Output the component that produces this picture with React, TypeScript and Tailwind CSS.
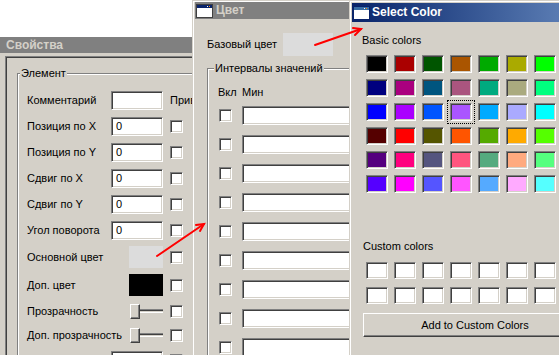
import React from 'react';

const sunken =
  'border border-t-[#808080] border-l-[#808080] border-b-white border-r-white shadow-[inset_1px_1px_0_#404040,inset_-1px_-1px_0_#d4d0c8]';
const raised =
  'border border-t-white border-l-white border-b-[#404040] border-r-[#404040] shadow-[inset_-1px_-1px_0_#808080]';

type PropRow = {
  label: string;
  kind: 'input' | 'swatch' | 'slider';
  h: string;
  value?: string;
  color?: string;
  extra?: string;
};

const propRows: PropRow[] = [
  { label: 'Комментарий', kind: 'input', h: 'h-[26px]', value: '', extra: 'Привязка' },
  { label: 'Позиция по X', kind: 'input', h: 'h-[26px]', value: '0' },
  { label: 'Позиция по Y', kind: 'input', h: 'h-[26px]', value: '0' },
  { label: 'Сдвиг по X', kind: 'input', h: 'h-[26px]', value: '0' },
  { label: 'Сдвиг по Y', kind: 'input', h: 'h-[26px]', value: '0' },
  { label: 'Угол поворота', kind: 'input', h: 'h-[26px]', value: '0' },
  { label: 'Основной цвет', kind: 'swatch', h: 'h-[28px]', color: '#dcdcdc' },
  { label: 'Доп. цвет', kind: 'swatch', h: 'h-[28px]', color: '#000000' },
  { label: 'Прозрачность', kind: 'slider', h: 'h-[24px]' },
  { label: 'Доп. прозрачность', kind: 'slider', h: 'h-[24px]' },
  { label: 'Толщина линии', kind: 'input', h: 'h-[26px]', value: '' },
];

// Qt standard palette, column-major: 8 columns x 6 rows
const basicColors: string[][] = (() => {
  const v3 = [0, 85, 170, 255];
  const v2 = [0, 127, 255];
  const list: string[] = [];
  for (let g = 0; g < 4; g++)
    for (let r = 0; r < 4; r++)
      for (let b = 0; b < 3; b++) {
        const hex = (n: number) => n.toString(16).padStart(2, '0');
        list.push(`#${hex(v3[r])}${hex(v3[g])}${hex(v2[b])}`);
      }
  const rows: string[][] = [];
  for (let row = 0; row < 6; row++) {
    const line: string[] = [];
    for (let col = 0; col < 8; col++) line.push(list[col * 6 + row]);
    rows.push(line);
  }
  return rows;
})();

function Checkbox() {
  return <div className={`w-[13px] h-[13px] shrink-0 bg-white ${sunken}`} />;
}

function WinIcon({ active }: { active: boolean }) {
  return (
    <svg width="17" height="14" viewBox="0 0 17 14" className="shrink-0">
      <rect x="0.5" y="0.5" width="16" height="13" fill="#ffffff" stroke={active ? '#0a246a' : '#404040'} />
      <rect x="1" y="1" width="15" height="3" fill={active ? '#3a6ea5' : '#0a246a'} />
      <rect x="13" y="2" width="1" height="1" fill="#ff8000" />
      <rect x="11" y="2" width="1" height="1" fill="#ffffff" />
    </svg>
  );
}

function Slider() {
  return (
    <div className="flex items-center w-[33px]">
      <div className={`w-[10px] h-[15px] bg-[#d4d0c8] ${raised}`} />
      <div className="flex-1 h-[4px] border-t border-t-[#808080] border-b border-b-white shadow-[inset_0_1px_0_#404040]" />
    </div>
  );
}

function PropertiesWindow() {
  return (
    <div className="absolute left-0 top-[37px] w-[200px] h-[318px] bg-[#d4d0c8]">
      <div className="h-[16px] bg-[#808080] pl-[6px] flex items-center text-[12px] font-bold text-[#d4d0c8]">
        Свойства
      </div>
      <div className="pt-[3px] pl-[5px]">
        <div className="border-l border-t border-[#808080] shadow-[inset_1px_1px_0_#404040] pl-[11px] pt-[10px] h-[300px]">
          <fieldset className="border border-[#808080] shadow-[inset_1px_1px_0_white,1px_1px_0_white] w-[200px]">
            <legend className="ml-[2px] px-px leading-[13px] bg-[#d4d0c8]">Элемент</legend>
            <div className="pl-[9px] pt-[7px]">
              {propRows.map((row) => (
                <div key={row.label} className={`flex items-center ${row.h}`}>
                  <div className="w-[84px] shrink-0 whitespace-nowrap">{row.label}</div>
                  <div className="w-[52px] shrink-0 flex justify-end">
                    {row.kind === 'input' && (
                      <div className={`w-[52px] h-[19px] bg-white pl-[4px] flex items-center ${sunken}`}>
                        {row.value}
                      </div>
                    )}
                    {row.kind === 'swatch' && (
                      <div className="w-[34px] h-[22px]" style={{ backgroundColor: row.color }} />
                    )}
                    {row.kind === 'slider' && <Slider />}
                  </div>
                  <div className="ml-[7px]">
                    {row.extra ? <span className="whitespace-nowrap">{row.extra}</span> : <Checkbox />}
                  </div>
                </div>
              ))}
            </div>
          </fieldset>
        </div>
      </div>
    </div>
  );
}

function ColorWindow() {
  return (
    <div className="absolute left-[192px] top-0 w-[175px] h-[355px] bg-[#d4d0c8] border-l border-t border-[#d4d0c8] shadow-[inset_1px_1px_0_white] pl-[2px] pt-px">
      <div className="h-[17px] bg-[#808080] flex items-center gap-[3px] pl-px text-[12px] font-bold text-[#d4d0c8]">
        <WinIcon active={false} />
        <span>Цвет</span>
      </div>
      <div className="pl-[12px] pt-[14px]">
        <div className="flex items-center h-[23px]">
          <div className="w-[76px] shrink-0">Базовый цвет</div>
          <div className="w-[50px] h-[23px] bg-[#dcdcdc]" />
        </div>
        <fieldset className="mt-[6px] border border-[#808080] shadow-[inset_1px_1px_0_white,1px_1px_0_white] w-[170px] h-[300px]">
          <legend className="ml-[6px] px-px leading-[13px] bg-[#d4d0c8]">Интервалы значений</legend>
          <div className="pl-[10px] pt-[10px]">
            <div className="flex items-center h-[14px]">
              <div className="w-[24px]">Вкл</div>
              <div>Мин</div>
            </div>
            <div className="mt-[7px] flex flex-col gap-[10px]">
              {Array.from({ length: 9 }).map((_, i) => (
                <div key={i} className="flex items-center h-[19px]">
                  <div className="pl-px w-[24px]">
                    <Checkbox />
                  </div>
                  <div className={`w-[130px] h-[19px] bg-white ${sunken}`} />
                </div>
              ))}
            </div>
          </div>
        </fieldset>
      </div>
    </div>
  );
}

function SelectColorWindow() {
  return (
    <div className="absolute left-[349px] top-0 w-[250px] h-[355px] bg-[#d4d0c8] border-l border-t border-[#d4d0c8] shadow-[inset_1px_1px_0_white] pl-[2px] pt-[2px]">
      <div className="h-[19px] bg-gradient-to-r from-[#0a246a] to-[#6a8cc0] flex items-center gap-[2px] pl-px text-[12px] font-bold text-white">
        <WinIcon active />
        <span>Select Color</span>
      </div>
      <div className="pl-[10px] pt-[12px] leading-[13px]">Basic colors</div>
      <div className="mt-[8px] pl-[14px] flex flex-col gap-[6px]">
        {basicColors.map((line, r) => (
          <div key={r} className="flex gap-[6px]">
            {line.map((c, k) => (
              <div
                key={k}
                className={`w-[22px] h-[18px] shrink-0 ${sunken} ${
                  r === 2 && k === 3 ? 'outline outline-1 outline-dotted outline-black outline-offset-[2px]' : ''
                }`}
                style={{ backgroundColor: c }}
              />
            ))}
          </div>
        ))}
      </div>
      <div className="mt-[47px] pl-[11px] leading-[13px]">Custom colors</div>
      <div className="mt-[9px] pl-[14px] flex flex-col gap-[8px]">
        {[0, 1].map((r) => (
          <div key={r} className="flex gap-[6px]">
            {Array.from({ length: 8 }).map((_, k) => (
              <div key={k} className={`w-[22px] h-[17px] shrink-0 bg-white ${sunken}`} />
            ))}
          </div>
        ))}
      </div>
      <div className="mt-[9px] ml-[11px]">
        <div className={`w-[224px] h-[24px] flex items-center justify-center bg-[#d4d0c8] ${raised}`}>
          Add to Custom Colors
        </div>
      </div>
    </div>
  );
}

export default function App() {
  return (
    <div className="relative w-[559px] h-[355px] overflow-hidden bg-white text-black text-[11px] leading-[13px] font-['Liberation_Sans',Arial,sans-serif]">
      <PropertiesWindow />
      <ColorWindow />
      <SelectColorWindow />
      {/* red pointers between the dialogs */}
      <svg className="absolute inset-0 pointer-events-none" width="559" height="355">
        <g stroke="#ff0000" strokeWidth="2" fill="none" strokeLinecap="round">
          <line x1="157" y1="256" x2="204" y2="224" />
          <polyline points="196,225 204,224 200,231" />
          <line x1="315" y1="45" x2="361" y2="29" />
          <polyline points="353,28 361,29 355,35" />
        </g>
      </svg>
    </div>
  );
}
